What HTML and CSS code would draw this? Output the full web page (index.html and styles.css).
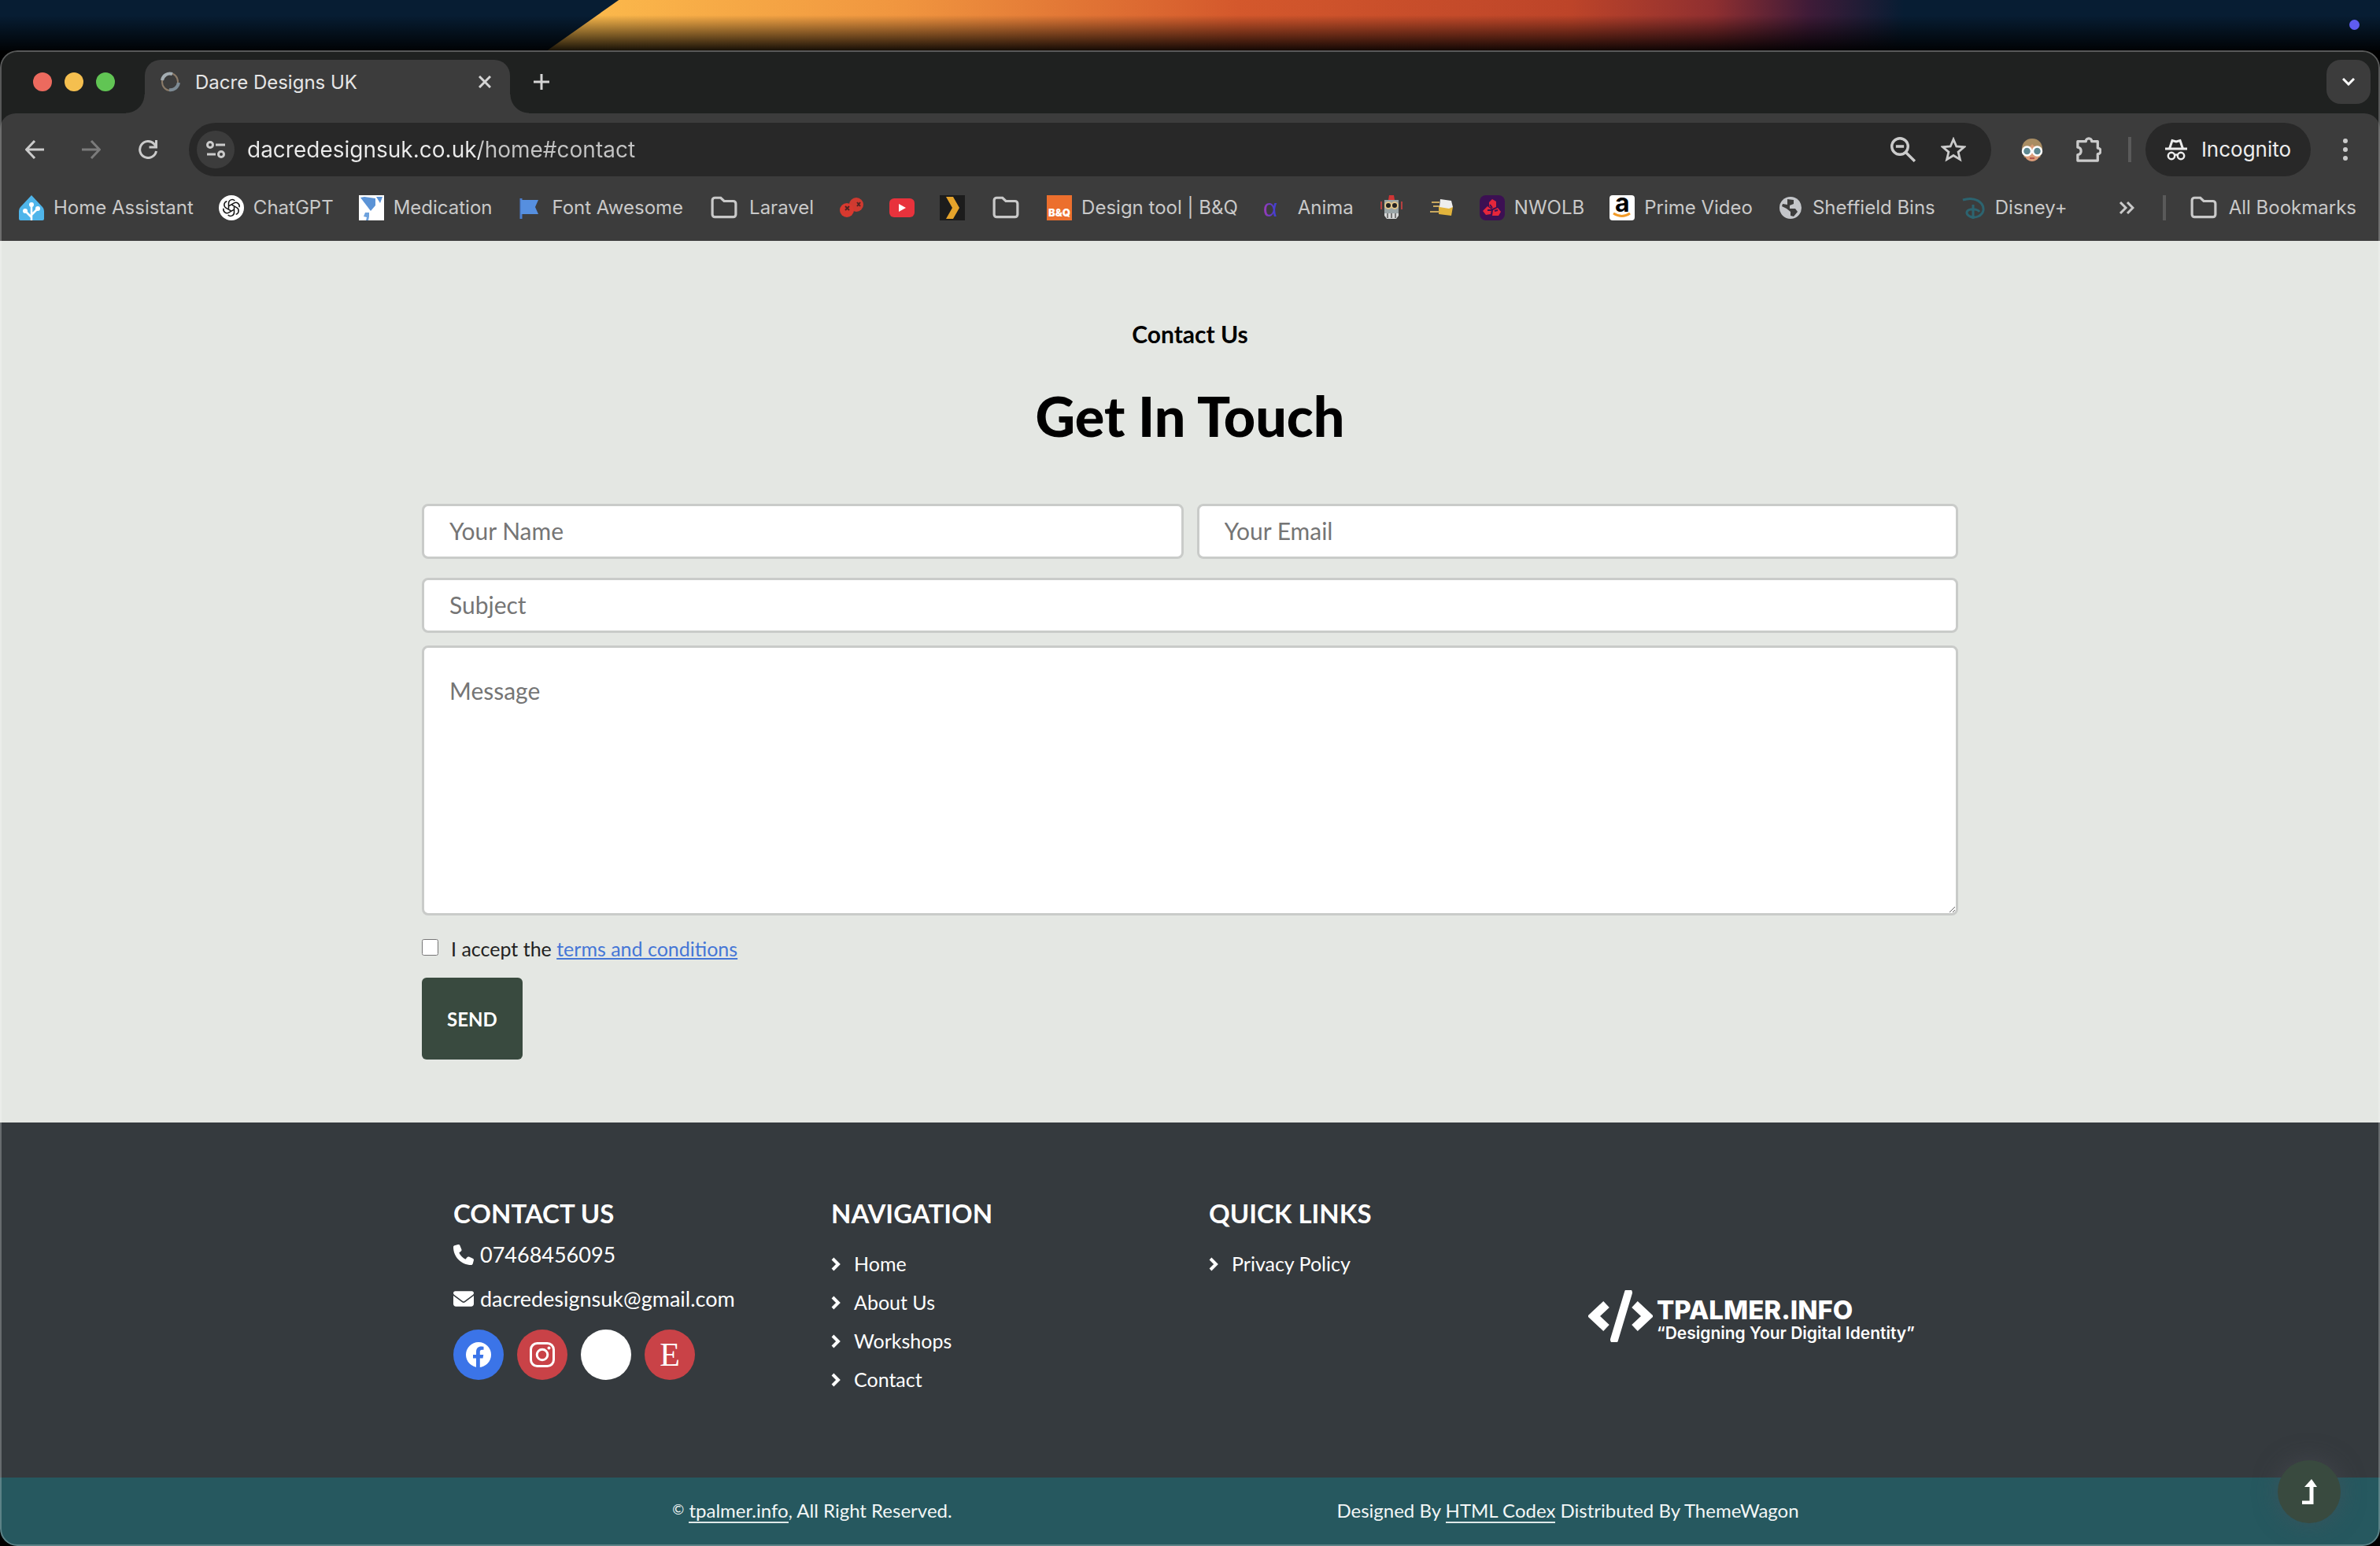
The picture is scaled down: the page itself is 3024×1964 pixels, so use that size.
FILE: index.html
```html
<!DOCTYPE html>
<html lang="en">
<head>
  <meta charset="utf-8">
  <title>Dacre Designs UK</title>
  <link rel="stylesheet" href="styles.css">
</head>
<body>
  <svg class="sprite" aria-hidden="true">
    <symbol id="folder" viewBox="0 0 32 32"><path d="M2 7v17a3 3 0 0 0 3 3h22a3 3 0 0 0 3-3V11a3 3 0 0 0-3-3H16l-4-4H5a3 3 0 0 0-3 3z" fill="none" stroke="currentColor" stroke-width="3"/></symbol>
    <symbol id="chevron" viewBox="0 0 12 18"><path d="M2 2l7 7-7 7" fill="none" stroke="currentColor" stroke-width="4"/></symbol>
  </svg>

  <div class="desktop">
    <div class="wallpaper"></div>
    <div class="wallpaper-shade"></div>
    <div class="desktop-dot"></div>
  </div>

  <div class="window">
    <div class="tab-strip">
      <div class="lights">
        <span class="light red"></span>
        <span class="light yellow"></span>
        <span class="light green"></span>
      </div>
      <div class="tab">
        <svg class="tab-icon" viewBox="0 0 28 28"><g fill="none"><ellipse cx="14" cy="14" rx="10" ry="11" stroke="#8a7a68" stroke-width="2"/><path d="M4 12C5 6 11 2 17 4" stroke="#a4adb2" stroke-width="4"/><path d="M25 15c-1 6-6 10-12 9" stroke="#7d8b95" stroke-width="4"/></g></svg>
        <span class="tab-title">Dacre Designs UK</span>
        <button class="tab-close" aria-label="Close tab"><svg viewBox="0 0 16 16"><path d="M1 1l14 14M15 1L1 15" stroke="currentColor" stroke-width="3"/></svg></button>
      </div>
      <button class="new-tab" aria-label="New tab"><svg viewBox="0 0 20 20"><path d="M10 0v20M0 10h20" stroke="currentColor" stroke-width="3"/></svg></button>
      <button class="tab-search" aria-label="Search tabs"><svg viewBox="0 0 16 10"><path d="M1 1l7 7 7-7" fill="none" stroke="currentColor" stroke-width="3"/></svg></button>
    </div>

    <div class="toolbar">
      <button class="tool" aria-label="Back"><svg viewBox="0 0 24 24"><path d="M24 12H2M12 1L1.500 12 12 23" fill="none" stroke="currentColor" stroke-width="3"/></svg></button>
      <button class="tool dim" aria-label="Forward"><svg viewBox="0 0 24 24"><path d="M0 12h22M12 1l10.500 11L12 23" fill="none" stroke="currentColor" stroke-width="3"/></svg></button>
      <button class="tool" aria-label="Reload"><svg viewBox="0 0 24 24"><path d="M22.500 14A10.500 10.500 0 1 1 20 5l2 3M22.500 0v9h-9" fill="none" stroke="currentColor" stroke-width="3"/></svg></button>
      <div class="omnibox">
        <button class="site-info" aria-label="Site information"><svg viewBox="0 0 24 24"><g fill="none" stroke="currentColor" stroke-width="3"><circle cx="5" cy="6" r="3.500"/><path d="M12 6h12M1 18h11"/><circle cx="19" cy="18" r="3.500"/></g></svg></button>
        <input class="url" type="text" value="dacredesignsuk.co.uk/home#contact" aria-label="Address">
        <button class="box-tool" aria-label="Zoom"><svg viewBox="0 0 28 28"><g fill="none" stroke="currentColor" stroke-width="3"><circle cx="10.500" cy="10.500" r="9"/><path d="M17 17l10 10M6 10.500h9"/></g></svg></button>
        <button class="box-tool" aria-label="Bookmark this tab"><svg viewBox="0 0 32 32"><path d="M16 3l3.800 9 9.700.8-7.400 6.300 2.300 9.500L16 23.500l-8.400 5.100 2.300-9.500-7.400-6.300 9.700-.8z" fill="none" stroke="currentColor" stroke-width="2.800"/></svg></button>
      </div>
      <button class="avatar" aria-label="Profile"><svg viewBox="0 0 32 32"><path d="M3 18C2 8 8 2 16 2s14 6 13 16l-3 8H6z" fill="#a98d63"/><path d="M6 14c6 0 9-3 10-5 2 3 6 5 10 5v6c0 7-5 11-10 11S6 27 6 20z" fill="#d99c78"/><circle cx="9.500" cy="18" r="5.500" fill="#5d8790" stroke="#fff" stroke-width="2.500"/><circle cx="22.500" cy="18" r="5.500" fill="#5d8790" stroke="#fff" stroke-width="2.500"/><path d="M13 27h6" stroke="#b4564b" stroke-width="2"/></svg></button>
      <button class="box-tool" aria-label="Extensions"><svg viewBox="0 0 34 34"><path d="M2 6h11a4 4 0 0 1 8 0h8v9a4 4 0 0 1 0 8v9H2v-8c6-1 6-9 0-10z" fill="none" stroke="currentColor" stroke-width="3.500" stroke-linejoin="round"/></svg></button>
      <span class="divider"></span>
      <button class="incognito"><svg viewBox="0 0 28 28"><path d="M0 13h28" stroke="currentColor" stroke-width="3"/><path d="M5.500 13L9 2.500l5 1.500 5-1.500L22.500 13" fill="none" stroke="currentColor" stroke-width="3"/><g fill="none" stroke="currentColor" stroke-width="2.500"><circle cx="8" cy="22" r="4.200"/><circle cx="20" cy="22" r="4.200"/><path d="M12 21q2-1 4 0"/></g></svg>Incognito</button>
      <button class="menu" aria-label="Menu"><svg viewBox="0 0 6 28"><g fill="currentColor"><circle cx="3" cy="3" r="3"/><circle cx="3" cy="14" r="3"/><circle cx="3" cy="25" r="3"/></g></svg></button>
    </div>

    <nav class="bookmarks">
      <a href="#"><svg viewBox="0 0 32 32"><path d="M16 0l14 15q2 2 2 5v10q0 2-2 2H2q-2 0-2-2V20q0-3 2-5z" fill="#4fb5ea"/><path d="M16 32V12M16 28l-8-8M16 25l8-8" stroke="#fff" stroke-width="2.500"/><g fill="#fff"><circle cx="16" cy="12" r="3"/><circle cx="8" cy="20" r="3"/><circle cx="24" cy="17" r="3"/></g></svg>Home Assistant</a>
      <a href="#"><svg viewBox="0 0 32 32"><circle cx="16" cy="16" r="16" fill="#fff"/><g fill="none" stroke="#111" stroke-width="1.500"><path id="petal" d="M12.500 17.500V10a4.500 4.500 0 0 1 7.800-3"/><use href="#petal" transform="rotate(60 16 16)"/><use href="#petal" transform="rotate(120 16 16)"/><use href="#petal" transform="rotate(180 16 16)"/><use href="#petal" transform="rotate(240 16 16)"/><use href="#petal" transform="rotate(300 16 16)"/></g></svg>ChatGPT</a>
      <a href="#"><svg viewBox="0 0 32 32"><path d="M0 0h32v32H0z" fill="#fff"/><path d="M2 3l5-1 14 2v9l-6 7z" fill="#5b93d6"/><path d="M22 2h8l-3 8z" fill="#5b93d6"/><path d="M8 22h5v5l-1 5H9l1-4-4-1z" fill="#6ea2dd"/></svg>Medication</a>
      <a href="#"><svg viewBox="0 0 32 32"><path d="M5 4v26" stroke="#4b7fd0" stroke-width="3"/><path d="M5 6h22l-4 9 4 9H5z" fill="#568fdf"/></svg>Font Awesome</a>
      <a href="#"><svg class="folder"><use href="#folder"/></svg>Laravel</a>
      <a href="#" aria-label="Cherries"><svg viewBox="0 0 32 32"><circle cx="22" cy="12" r="9" fill="#cf3a30"/><circle cx="10" cy="19" r="9" fill="#d8392f"/><path d="M8 14l5 5m0-5l-5 5M23 9l4 5m0-5l-4 5" stroke="#4c2523" stroke-width="2"/></svg></a>
      <a href="#" aria-label="YouTube"><svg viewBox="0 0 32 32"><rect y="4" width="32" height="24" rx="6" fill="#e8323c"/><path d="M12 11l9 5-9 5z" fill="#fff"/></svg></a>
      <a href="#" aria-label="Plex"><svg viewBox="0 0 32 32"><path d="M0 0h32v32H0z" fill="#1c1c1c"/><path d="M8 2h9l8 14-8 14H8l8-14z" fill="#e5a32b"/></svg></a>
      <a href="#" aria-label="Folder"><svg class="folder"><use href="#folder"/></svg></a>
      <a href="#"><span class="bq-icon">B&amp;Q</span>Design tool | B&amp;Q</a>
      <a href="#"><span class="anima-icon">α</span>Anima</a>
      <a href="#" aria-label="Robot"><svg viewBox="0 0 32 32"><path d="M13 0h6l1 6h-8z" fill="#cf3535"/><path d="M7 6h18v17H7z" fill="#9aa5a7"/><path d="M3 8v10M29 8v10" stroke="#b64040" stroke-width="2"/><circle cx="12" cy="13" r="4" fill="#222" stroke="#e0c58a" stroke-width="2"/><circle cx="20" cy="13" r="4" fill="#222" stroke="#e0c58a" stroke-width="2"/><path d="M7 23h18v3l-3 4H10l-3-4z" fill="#d7d9d9"/><path d="M11 23v6m5-6v6m5-6v6" stroke="#777" stroke-width="2"/></svg></a>
      <a href="#" aria-label="Beer"><svg viewBox="0 0 32 32"><path d="M12 14l18 1-2 11-16-2z" fill="#e2b43c"/><path d="M14 5l14 2 2 8-5 2-12-2z" fill="#eee"/><path d="M3 9h10M5 14h8M1 21h12" stroke="#c8a860" stroke-width="2"/></svg></a>
      <a href="#"><svg viewBox="0 0 32 32"><rect width="32" height="32" rx="8" fill="#3c1053"/><g fill="#e5263b"><path d="M12 9l4-4 5 3v7l-5 2-4-3z"/><path d="M4 20l6-6 5 4-1 6-6 1z"/><path d="M17 19l6-3 4 5-3 5h-8z"/></g><path d="M16 16l-3-4M15 19h-5M19 20l4-1" stroke="#3c1053" stroke-width="2"/></svg>NWOLB</a>
      <a href="#"><span class="prime-icon">a<svg viewBox="0 0 24 7"><path d="M1 1q11 7 21 0" fill="none" stroke="#f29b28" stroke-width="3"/></svg></span>Prime Video</a>
      <a href="#"><svg viewBox="0 0 32 32"><circle cx="16" cy="16" r="14" fill="#c4c6ca"/><path d="M12 5l8 1v5l-5 2v4h7l3 4-5 6-4-1v-5l-5-4-6-3 1-3 6 1z" fill="#3c3c3c"/></svg>Sheffield Bins</a>
      <a href="#"><svg viewBox="0 0 32 32"><path d="M3 6C18 1 30 9 29 19c-1 7-10 11-17 8-6-3-5-8 1-9 5-1 10 1 11 3M16 12v18" fill="none" stroke="#2c6470" stroke-width="3"/></svg>Disney+</a>
      <button class="overflow" aria-label="More bookmarks"><svg viewBox="0 0 20 16"><path d="M2 1l7 7-7 7M11 1l7 7-7 7" fill="none" stroke="currentColor" stroke-width="3"/></svg></button>
      <span class="divider"></span>
      <a href="#"><svg class="folder"><use href="#folder"/></svg>All Bookmarks</a>
    </nav>

    <main class="contact">
      <p class="eyebrow">Contact Us</p>
      <h1>Get In Touch</h1>
      <form class="contact-form">
        <div class="form-row">
          <input type="text" placeholder="Your Name" aria-label="Your Name">
          <input type="email" placeholder="Your Email" aria-label="Your Email">
        </div>
        <input type="text" placeholder="Subject" aria-label="Subject">
        <textarea placeholder="Message" aria-label="Message"></textarea>
        <div class="accept">
          <input type="checkbox" id="accept">
          <label for="accept">I accept the <a href="#">terms and conditions</a></label>
        </div>
        <button class="send" type="button">SEND</button>
      </form>
    </main>

    <footer class="footer">
      <div class="footer-grid">
        <section>
          <h2>CONTACT US</h2>
          <p class="contact-line"><svg viewBox="0 0 512 512"><path fill="currentColor" d="M164.900 24.600c-7.700-18.600-28-28.500-47.400-23.200l-88 24C12.100 30.200 0 46 0 64C0 311.400 200.600 512 448 512c18 0 33.800-12.100 38.600-29.500l24-88c5.300-19.400-4.600-39.700-23.200-47.400l-96-40c-16.300-6.800-35.200-2.100-46.300 11.600L304.700 368C234.300 334.700 177.300 277.700 144 207.300L193.300 167c13.700-11.200 18.400-30 11.600-46.300l-40-96z"/></svg>07468456095</p>
          <p class="contact-line"><svg viewBox="0 0 512 512"><path fill="currentColor" d="M48 64C21.500 64 0 85.500 0 112c0 15.100 7.100 29.300 19.200 38.400L236.800 313.600c11.400 8.500 27 8.500 38.400 0L492.800 150.400c12.100-9.100 19.200-23.300 19.200-38.400c0-26.500-21.500-48-48-48H48zM0 176V384c0 35.300 28.700 64 64 64H448c35.300 0 64-28.700 64-64V176L294.400 339.200c-22.800 17.100-54 17.100-76.800 0L0 176z"/></svg>dacredesignsuk@gmail.com</p>
          <div class="social">
            <a class="facebook" href="#" aria-label="Facebook"><svg viewBox="0 0 32 32"><circle cx="16" cy="16" r="16" fill="#fff"/><path d="M13 32V20.500H9V16h4v-3.500c0-4.500 2.500-7 6.500-7 1.500 0 3 .3 3 .3v4h-2c-2 0-2.700 1.200-2.700 2.500V16h4.500l-.8 4.500h-3.700V32z" fill="#3b74e8"/></svg></a>
            <a class="instagram" href="#" aria-label="Instagram"><svg viewBox="0 0 32 32"><g fill="none" stroke="#fff" stroke-width="3"><rect x="1.500" y="1.500" width="29" height="29" rx="8"/><circle cx="16" cy="16" r="6.800"/></g><circle cx="24.500" cy="7.500" r="2" fill="#fff"/></svg></a>
            <a class="tiktok" href="#" aria-label="TikTok"></a>
            <a class="etsy" href="#" aria-label="Etsy">E</a>
          </div>
        </section>
        <section>
          <h2>NAVIGATION</h2>
          <a class="footer-link" href="#"><svg><use href="#chevron"/></svg>Home</a>
          <a class="footer-link" href="#"><svg><use href="#chevron"/></svg>About Us</a>
          <a class="footer-link" href="#"><svg><use href="#chevron"/></svg>Workshops</a>
          <a class="footer-link" href="#"><svg><use href="#chevron"/></svg>Contact</a>
        </section>
        <section>
          <h2>QUICK LINKS</h2>
          <a class="footer-link" href="#"><svg><use href="#chevron"/></svg>Privacy Policy</a>
        </section>
        <section class="credit">
          <svg viewBox="0 0 82 66"><path d="M23 18L7 33l16 15M59 18l16 15-16 15" fill="none" stroke="#fff" stroke-width="11"/><path d="M51 3L33 63" stroke="#fff" stroke-width="10" stroke-linecap="round"/></svg>
          <div>
            <div class="credit-name">TPALMER.INFO</div>
            <div class="credit-tag">“Designing Your Digital Identity”</div>
          </div>
        </section>
      </div>
    </footer>

    <div class="copyright">
      <div class="copyright-grid">
        <p><small>©</small> <a href="#">tpalmer.info</a>, All Right Reserved.</p>
        <p>Designed By <a href="#">HTML Codex</a> Distributed By ThemeWagon</p>
      </div>
    </div>

    <button class="back-to-top" aria-label="Back to top"><svg viewBox="0 0 20 32"><path d="M1 30h12V8" fill="none" stroke="#fff" stroke-width="5"/><path d="M4 10L13 0l7 10z" fill="#fff"/></svg></button>
  </div>
</body>
</html>
```
FILE: styles.css
```css
* {
  box-sizing: border-box;
}

body {
  font-family: 'Lato', sans-serif;
  margin: 0;
  height: 100vh;
  display: flex;
  flex-direction: column;
  background-color: #000;
  overflow: hidden;
}

p, h1, h2 {
  margin: 0;
}

button {
  border: none;
  background: none;
  padding: 0;
  color: inherit;
  font: inherit;
  cursor: pointer;
}

svg {
  display: block;
  flex: none;
}

.sprite {
  display: none;
}

/* Desktop strip above the window */
.desktop {
  position: relative;
  height: 64px;
  flex: none;
  background-color: #071d33;
}

.wallpaper {
  height: 100%;
  background: linear-gradient(to right, #fcbb4c 24%, #f0953f 38%, #d4582c 52%, #bd4429 66%, #8f2f30 72%, #3f1b38 76%, #071d33 80%);
  clip-path: polygon(26% 0, 100% 0, 100% 100%, 23% 100%);
}

.wallpaper-shade {
  position: absolute;
  inset: 0;
  background: linear-gradient(to bottom, transparent 30%, rgba(0, 0, 0, 0.9));
}

.desktop-dot {
  position: absolute;
  right: 26px;
  top: 25px;
  width: 13px;
  height: 13px;
  border-radius: 50%;
  background-color: #5f5cf0;
}

/* Browser window */
.window {
  position: relative;
  flex: 1;
  display: flex;
  flex-direction: column;
  border-radius: 22px;
  overflow: hidden;
  background-color: #1f2120;
}

.window::after {
  content: '';
  position: absolute;
  inset: 0;
  border: 2px solid rgba(255, 255, 255, 0.25);
  border-radius: 22px;
  pointer-events: none;
}

.tab-strip {
  display: flex;
  align-items: center;
  height: 80px;
  padding: 0 12px 0 42px;
  font-family: 'Inter', sans-serif;
  color: #d5d5d5;
}

.lights {
  display: flex;
  gap: 16px;
}

.light {
  width: 24px;
  height: 24px;
  border-radius: 50%;
}

.light.red {
  background-color: #ec6a5e;
}

.light.yellow {
  background-color: #f5bf4f;
}

.light.green {
  background-color: #61c554;
}

.tab {
  position: relative;
  display: flex;
  align-items: center;
  align-self: flex-end;
  width: 464px;
  height: 68px;
  margin-left: 38px;
  padding: 0 24px 12px 18px;
  border-radius: 20px 20px 0 0;
  background-color: #3c3c3c;
}

/* Curved feet of the active tab */
.tab::before,
.tab::after {
  content: '';
  position: absolute;
  bottom: 0;
  width: 24px;
  height: 24px;
}

.tab::before {
  right: 100%;
  background: radial-gradient(circle at 0 0, transparent 23px, #3c3c3c 24px);
}

.tab::after {
  left: 100%;
  background: radial-gradient(circle at 100% 0, transparent 23px, #3c3c3c 24px);
}

.tab-icon {
  width: 28px;
  height: 28px;
}

.tab-title {
  flex: 1;
  margin-left: 18px;
  font-size: 24px;
  color: #e6e6e6;
}

.tab-close svg {
  width: 16px;
  height: 16px;
}

.new-tab {
  margin-left: 30px;
}

.new-tab svg {
  width: 20px;
  height: 20px;
}

.tab-search {
  display: flex;
  align-items: center;
  justify-content: center;
  width: 56px;
  height: 56px;
  margin-left: auto;
  border-radius: 18px;
  background-color: #3c3c3c;
  color: #fff;
}

.tab-search svg {
  width: 16px;
  height: 10px;
}

.toolbar {
  display: flex;
  align-items: center;
  height: 91px;
  padding: 0 8px;
  border-radius: 20px 20px 0 0;
  background-color: #3c3c3c;
  color: #cbcbcb;
  font-family: 'Inter', sans-serif;
}

.tool {
  display: flex;
  justify-content: center;
  width: 72px;
}

.tool svg {
  width: 24px;
  height: 24px;
}

.dim {
  color: #7b7b7b;
}

.omnibox {
  flex: 1;
  display: flex;
  align-items: center;
  gap: 16px;
  height: 68px;
  margin: 0 16px;
  padding: 0 24px 0 10px;
  border-radius: 34px;
  background-color: #282828;
}

.site-info {
  display: flex;
  align-items: center;
  justify-content: center;
  width: 48px;
  height: 48px;
  border-radius: 50%;
  background-color: #3c3c3c;
}

.site-info svg {
  width: 24px;
  height: 24px;
}

/* Host is brighter than the path after it */
.url {
  flex: 1;
  border: none;
  outline: none;
  padding: 0;
  background: linear-gradient(to right, #ebebeb 296px, #c4c4c4 296px);
  -webkit-background-clip: text;
  background-clip: text;
  color: transparent;
  font-family: inherit;
  font-size: 28px;
  line-height: 40px;
}

.box-tool {
  display: flex;
  align-items: center;
  justify-content: center;
  width: 48px;
}

.box-tool svg,
.avatar svg {
  width: 32px;
  height: 32px;
}

.avatar {
  margin: 0 32px 0 20px;
}

.divider {
  flex: none;
  width: 4px;
  height: 32px;
  margin: 0 18px 0 26px;
  background-color: #5a5a5a;
}

.incognito {
  display: flex;
  align-items: center;
  justify-content: center;
  gap: 18px;
  width: 210px;
  height: 68px;
  margin-right: 8px;
  border-radius: 34px;
  background-color: #282828;
  color: #ededed;
  font-size: 26px;
}

.incognito svg {
  width: 28px;
  height: 28px;
}

.menu {
  width: 72px;
  display: flex;
  justify-content: center;
}

.menu svg {
  width: 6px;
  height: 28px;
}

.bookmarks {
  display: flex;
  align-items: center;
  height: 71px;
  padding: 0 14px 14px 8px;
  background-color: #3c3c3c;
  color: #c9c9c9;
  font-family: 'Inter', sans-serif;
  font-size: 24px;
}

.bookmarks a {
  display: flex;
  align-items: center;
  gap: 12px;
  padding: 0 16px;
  color: inherit;
  text-decoration: none;
  white-space: nowrap;
}

.bookmarks a > svg {
  width: 32px;
  height: 32px;
}

.bookmarks a > .folder {
  width: 40px;
  height: 34px;
}

.bookmarks .divider {
  margin: 0 12px 0 36px;
}

.overflow {
  margin-left: auto;
}

.overflow svg {
  width: 20px;
  height: 16px;
}

.bq-icon {
  width: 32px;
  height: 32px;
  padding-top: 12px;
  background-color: #ec6f2d;
  color: #fff;
  font-size: 13px;
  font-weight: 900;
  line-height: 20px;
  text-align: center;
}

.anima-icon {
  width: 32px;
  background: linear-gradient(to right, #a23bb5, #2a3fd8 60%);
  -webkit-background-clip: text;
  background-clip: text;
  color: transparent;
  font-family: 'Liberation Sans', sans-serif;
  font-size: 32px;
  line-height: 32px;
}

.prime-icon {
  width: 32px;
  height: 32px;
  border-radius: 4px;
  background-color: #fff;
  color: #000;
  font-size: 32px;
  font-weight: 700;
  line-height: 20px;
  text-align: center;
}

.prime-icon svg {
  width: 24px;
  height: 7px;
  margin: 2px auto 0;
}

/* Contact section */
.contact {
  padding: 94px 24px 80px;
  background-color: #e4e7e3;
  color: #000;
}

.eyebrow {
  font-size: 30px;
  font-weight: 700;
  line-height: 48px;
  text-align: center;
}

h1 {
  margin-top: 40px;
  font-size: 70px;
  font-weight: 900;
  line-height: 80px;
  text-align: center;
}

.contact-form {
  display: flex;
  flex-direction: column;
  max-width: 1952px;
  margin: 72px auto 0;
}

.form-row {
  display: flex;
  gap: 17px;
  margin-bottom: 24px;
}

.form-row input {
  flex: 1;
}

.contact-form input:not([type='checkbox']),
textarea {
  height: 70px;
  padding: 0 32px 2px;
  border: 3px solid #c9cbc9;
  border-radius: 8px;
  background-color: #fff;
  font-family: inherit;
  font-size: 30px;
  line-height: 40px;
}

.contact-form textarea {
  height: 343px;
  margin-top: 16px;
  padding: 34px 32px;
}

::placeholder {
  color: #757575;
}

.accept {
  display: flex;
  align-items: center;
  gap: 16px;
  height: 40px;
  margin-top: 22px;
  font-size: 25px;
  color: #222;
}

.accept input {
  width: 21px;
  height: 21px;
  margin: 0 0 4px;
}

.accept a {
  color: #4576d6;
}

.send {
  align-self: flex-start;
  height: 104px;
  margin-top: 17px;
  padding: 0 32px;
  border-radius: 6px;
  background-color: #394a3f;
  color: #fff;
  font-size: 24px;
  font-weight: 700;
}

/* Footer */
.footer {
  flex: 1;
  padding-top: 95px;
  background-color: #353a3e;
  color: #fff;
}

.footer-grid {
  display: grid;
  grid-template-columns: repeat(4, 1fr);
  max-width: 1920px;
  margin: 0 auto;
}

.footer-grid section {
  padding-left: 24px;
}

h2 {
  margin-bottom: 13px;
  font-size: 33px;
  font-weight: 700;
  line-height: 40px;
}

.contact-line {
  display: flex;
  align-items: center;
  gap: 8px;
  margin-bottom: 16px;
  font-size: 27px;
  line-height: 40px;
}

.contact-line svg {
  width: 26px;
  height: 26px;
}

.social {
  display: flex;
  gap: 17px;
  padding-top: 3px;
}

.social a {
  display: flex;
  align-items: center;
  justify-content: center;
  width: 64px;
  height: 64px;
  border-radius: 50%;
  color: #fff;
  text-decoration: none;
}

.social svg {
  width: 32px;
  height: 32px;
}

.social .facebook {
  background-color: #3b74e8;
}

.social .instagram,
.social .etsy {
  background-color: #c94247;
}

.social .tiktok {
  background-color: #fff;
}

.social .etsy {
  font-family: 'Liberation Serif', serif;
  font-size: 42px;
}

.footer-link {
  display: flex;
  align-items: center;
  gap: 17px;
  color: #fff;
  font-size: 25px;
  line-height: 49px;
  text-decoration: none;
}

h2 + .footer-link {
  margin-top: 20px;
}

.footer-link svg {
  width: 12px;
  height: 18px;
}

.credit {
  display: flex;
  align-items: flex-start;
  gap: 5px;
  padding-top: 118px;
}

.footer-grid .credit {
  padding-left: 26px;
}

.credit svg {
  width: 82px;
  height: 66px;
}

.credit-name {
  padding-top: 6px;
  font-family: 'Inter', sans-serif;
  font-size: 33px;
  font-weight: 800;
  line-height: 38px;
}

.credit-tag {
  font-family: 'Inter', sans-serif;
  font-size: 21px;
  font-weight: 600;
  line-height: 22px;
  white-space: nowrap;
}

.copyright {
  padding: 22px 0 25px;
  background-color: #26585f;
  color: #f2f6f6;
  font-size: 24px;
  line-height: 40px;
}

.copyright-grid {
  display: grid;
  grid-template-columns: 1fr 1fr;
  max-width: 1920px;
  margin: 0 auto;
  text-align: center;
}

.copyright a {
  color: inherit;
  text-decoration: none;
  border-bottom: 2px solid #dfe8e8;
}

.copyright small {
  font-size: 18px;
  line-height: 1;
  vertical-align: 4px;
}

.back-to-top {
  position: absolute;
  right: 50px;
  bottom: 29px;
  display: flex;
  align-items: center;
  justify-content: center;
  width: 80px;
  height: 80px;
  border-radius: 50%;
  background-color: #394a3f;
  box-shadow: 0 0 30px rgba(80, 80, 90, 0.5);
}

.back-to-top svg {
  width: 20px;
  height: 32px;
}
```
